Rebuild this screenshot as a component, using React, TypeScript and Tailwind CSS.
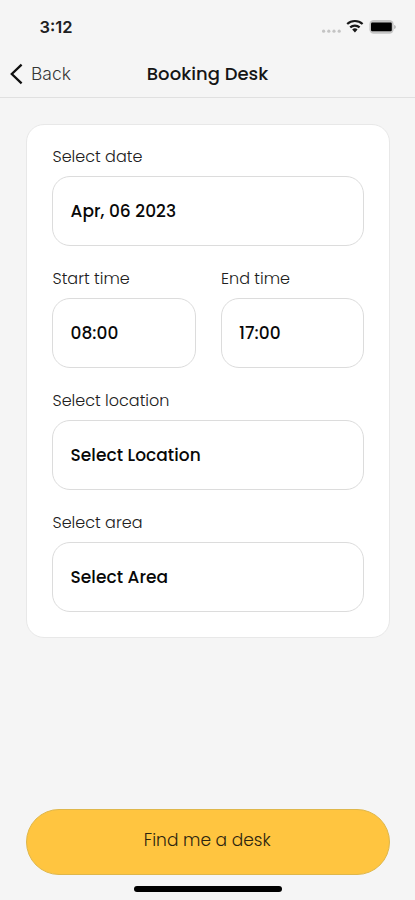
import type { ReactNode } from "react";

type FieldProps = {
  label: string;
  value: string;
};

function Field({ label, value }: FieldProps) {
  return (
    <div className="flex min-w-0 flex-1 flex-col">
      <div className="flex h-[38px] items-center whitespace-nowrap pl-[0.5px] text-[16px] font-light text-[#202020]">
        {label}
      </div>
      <button className="flex h-[70px] w-full items-center whitespace-nowrap rounded-[18px] border border-[#dcdcdc] bg-white pl-[17.5px] pt-[2px] text-left text-[17px] font-medium tracking-[0.05px] text-[#080808]">
        {value}
      </button>
    </div>
  );
}

function Row({ children }: { children: ReactNode }) {
  return <div className="flex gap-[25px]">{children}</div>;
}

function StatusBar() {
  return (
    <div className="flex h-[54px] items-center justify-between pl-[39.5px] pr-[19px]">
      <span className="font-['Inter',sans-serif] text-[16.5px] font-semibold text-[#202020]">3:12</span>
      <svg width="75" height="18" viewBox="0 0 75 18" fill="none">
        <g fill="#c4c4c4">
          <circle cx="2.6" cy="13.2" r="1.6" />
          <circle cx="7.8" cy="13.2" r="1.6" />
          <circle cx="13" cy="13.2" r="1.6" />
          <circle cx="18.2" cy="13.2" r="1.6" />
        </g>
        <g stroke="#181818" strokeWidth="2.2">
          <path d="M26.2 6a11.4 11.4 0 0 1 15.4 0" />
          <path d="M29.2 9.4a7 7 0 0 1 9.4 0" />
        </g>
        <path d="M31.2 11.5a3.9 3.9 0 0 1 5.4 0l-2.7 3z" fill="#181818" />
        <rect x="48.4" y="2" width="24.2" height="13.8" rx="4.2" fill="#c4c4c4" />
        <rect x="50" y="4.6" width="20.8" height="8.6" rx="1.2" fill="#000" />
        <path d="M73.3 7c1.8.6 1.8 3.4 0 4z" fill="#a5a5a5" />
      </svg>
    </div>
  );
}

export default function App() {
  return (
    <div className="flex h-[900px] w-[415px] flex-col overflow-hidden bg-[#f5f5f5] font-['Poppins','Inter',sans-serif]">
      <StatusBar />
      <header className="grid h-[44px] grid-cols-[1fr_auto_1fr] items-center border-b border-[#e0e0e0] pb-[4px]">
        <button className="flex items-center gap-[8px] pl-[10px] font-['Inter',sans-serif] text-[17.5px] font-light text-[#353535]">
          <svg width="13" height="22" viewBox="0 0 13 22" fill="none" stroke="#101010" strokeWidth="2.3">
            <path d="M11.6 1.6 1.8 11l9.8 9.4" />
          </svg>
          <span className="pt-[1px]">Back</span>
        </button>
        <h1 className="whitespace-nowrap text-[18px] font-medium tracking-[0.04px] text-[#151515]">Booking Desk</h1>
        <span />
      </header>

      <main className="ml-[26px] mr-[25px] mt-[26px] flex h-[514px] flex-col gap-[14px] rounded-[18px] border border-[#e8e8e8] bg-white px-[25px] pt-[13px]">
        <Row>
          <Field label="Select date" value="Apr, 06 2023" />
        </Row>
        <Row>
          <Field label="Start time" value="08:00" />
          <Field label="End time" value="17:00" />
        </Row>
        <Row>
          <Field label="Select location" value="Select Location" />
        </Row>
        <Row>
          <Field label="Select area" value="Select Area" />
        </Row>
      </main>

      <footer className="mt-auto flex flex-col items-center pb-[8px] pl-[26px] pr-[25px]">
        <button className="flex h-[66px] w-full items-center justify-center rounded-full border border-[#dfb74b] bg-[#ffc540] pb-[2px] pr-[1.5px] text-[17px] font-light text-[#2c240f]">
          Find me a desk
        </button>
        <div className="mt-[11px] h-[6px] w-[148px] rounded-full bg-black" />
      </footer>
    </div>
  );
}
